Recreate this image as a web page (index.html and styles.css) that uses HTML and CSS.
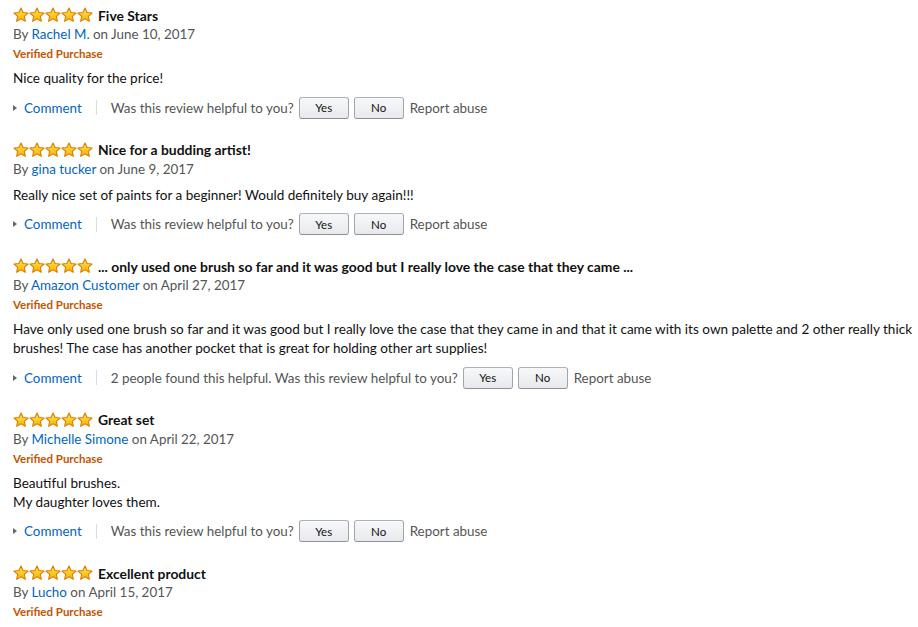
FILE: index.html
```html
<!DOCTYPE html>
<html>
<head>
<meta charset="utf-8">
<link rel="stylesheet" href="styles.css">
</head>
<body>
<svg width="0" height="0" class="defs">
  <defs>
    <linearGradient id="sg" x1="0" y1="0" x2="0" y2="1">
      <stop offset="0" stop-color="#ffe35c"/>
      <stop offset="1" stop-color="#f7b500"/>
    </linearGradient>
    <symbol id="star" viewBox="0 0 16 16">
      <path d="M8 0.9 L10.1 5.5 L15.1 6.0 L11.3 9.3 L12.4 14.3 L8 11.7 L3.6 14.3 L4.7 9.3 L0.9 6.0 L5.9 5.5 Z" fill="url(#sg)" stroke="#e27c00" stroke-width="1.1" stroke-linejoin="round"/>
    </symbol>
  </defs>
</svg>
<div class="reviews">
  <div class="review">
    <div class="title-row">
      <span class="stars"><svg><use href="#star"/></svg><svg><use href="#star"/></svg><svg><use href="#star"/></svg><svg><use href="#star"/></svg><svg><use href="#star"/></svg></span>
      <span class="title">Five Stars</span>
    </div>
    <div class="byline">By <a class="author">Rachel M.</a> on June 10, 2017</div>
    <div class="verified">Verified Purchase</div>
    <div class="body">Nice quality for the price!</div>
    <div class="actions">
      <span class="tri"></span><a class="comment">Comment</a><span class="sep"></span>
      <span class="helpful">Was this review helpful to you?</span>
      <button class="btn">Yes</button><button class="btn">No</button>
      <span class="report">Report abuse</span>
    </div>
  </div>

  <div class="review">
    <div class="title-row">
      <span class="stars"><svg><use href="#star"/></svg><svg><use href="#star"/></svg><svg><use href="#star"/></svg><svg><use href="#star"/></svg><svg><use href="#star"/></svg></span>
      <span class="title">Nice for a budding artist!</span>
    </div>
    <div class="byline">By <a class="author">gina tucker</a> on June 9, 2017</div>
    <div class="body">Really nice set of paints for a beginner! Would definitely buy again!!!</div>
    <div class="actions">
      <span class="tri"></span><a class="comment">Comment</a><span class="sep"></span>
      <span class="helpful">Was this review helpful to you?</span>
      <button class="btn">Yes</button><button class="btn">No</button>
      <span class="report">Report abuse</span>
    </div>
  </div>

  <div class="review">
    <div class="title-row">
      <span class="stars"><svg><use href="#star"/></svg><svg><use href="#star"/></svg><svg><use href="#star"/></svg><svg><use href="#star"/></svg><svg><use href="#star"/></svg></span>
      <span class="title">... only used one brush so far and it was good but I really love the case that they came ...</span>
    </div>
    <div class="byline">By <a class="author">Amazon Customer</a> on April 27, 2017</div>
    <div class="verified">Verified Purchase</div>
    <div class="body">Have only used one brush so far and it was good but I really love the case that they came in and that it came with its own palette and 2 other really thick brushes! The case has another pocket that is great for holding other art supplies!</div>
    <div class="actions">
      <span class="tri"></span><a class="comment">Comment</a><span class="sep"></span>
      <span class="helpful">2 people found this helpful. Was this review helpful to you?</span>
      <button class="btn">Yes</button><button class="btn">No</button>
      <span class="report">Report abuse</span>
    </div>
  </div>

  <div class="review">
    <div class="title-row">
      <span class="stars"><svg><use href="#star"/></svg><svg><use href="#star"/></svg><svg><use href="#star"/></svg><svg><use href="#star"/></svg><svg><use href="#star"/></svg></span>
      <span class="title">Great set</span>
    </div>
    <div class="byline">By <a class="author">Michelle Simone</a> on April 22, 2017</div>
    <div class="verified">Verified Purchase</div>
    <div class="body">Beautiful brushes.<br>My daughter loves them.</div>
    <div class="actions">
      <span class="tri"></span><a class="comment">Comment</a><span class="sep"></span>
      <span class="helpful">Was this review helpful to you?</span>
      <button class="btn">Yes</button><button class="btn">No</button>
      <span class="report">Report abuse</span>
    </div>
  </div>

  <div class="review">
    <div class="title-row">
      <span class="stars"><svg><use href="#star"/></svg><svg><use href="#star"/></svg><svg><use href="#star"/></svg><svg><use href="#star"/></svg><svg><use href="#star"/></svg></span>
      <span class="title">Excellent product</span>
    </div>
    <div class="byline">By <a class="author">Lucho</a> on April 15, 2017</div>
    <div class="verified">Verified Purchase</div>
  </div>
</div>
</body>
</html>
```

FILE: styles.css
```css
html, body {
  margin: 0;
  padding: 0;
  background: #fff;
}
body {
  font-family: Lato, "Liberation Sans", Arial, sans-serif;
  font-size: 13.4px;
  color: #111;
  overflow: hidden;
}
.defs {
  position: absolute;
  width: 0;
  height: 0;
}
.reviews {
  padding: 5.5px 4px 0 13px;
}
.review {
  margin-bottom: 21.5px;
}
.title-row {
  display: flex;
  align-items: center;
  height: 19.5px;
  white-space: nowrap;
}
.stars {
  display: flex;
  margin-right: 5px;
}
.stars svg {
  width: 16px;
  height: 16px;
  display: block;
}
.title {
  font-size: 13.9px;
  font-weight: bold;
  color: #111;
}
.byline {
  line-height: 19px;
  color: #555;
}
.author {
  color: #0066c0;
  text-decoration: none;
}
.verified {
  margin-top: 2px;
  line-height: 16px;
  font-size: 11.5px;
  font-weight: bold;
  color: #c45500;
}
.body {
  margin-top: 7px;
  line-height: 19px;
  font-size: 13.55px;
  color: #111;
}
.actions {
  margin-top: 8.5px;
  height: 22px;
  display: flex;
  align-items: center;
  color: #555;
  white-space: nowrap;
}
.tri {
  width: 0;
  height: 0;
  border-top: 3.5px solid transparent;
  border-bottom: 3.5px solid transparent;
  border-left: 4px solid #666;
  margin-right: 7px;
}
.comment {
  color: #0066c0;
}
.sep {
  width: 1px;
  height: 15px;
  background: #ddd;
  margin: 0 14px 0 14px;
}
.btn {
  font-family: inherit;
  width: 50px;
  height: 22px;
  margin-left: 5px;
  padding: 0;
  font-size: 11.5px;
  color: #111;
  border: 1px solid #adb1b8;
  border-color: #adb1b8 #a2a6ac #8d9096;
  border-radius: 3px;
  background: linear-gradient(#f7f8fa, #e7e9ec);
}
.btn + .btn {
  margin-left: 5px;
}
.report {
  margin-left: 6px;
}
```
